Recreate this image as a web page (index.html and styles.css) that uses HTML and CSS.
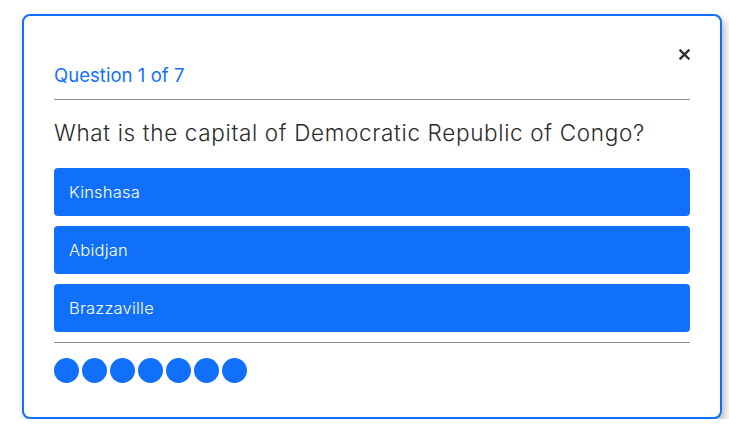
FILE: index.html
```html
<!DOCTYPE html>
<html lang="en">
<head>
<meta charset="utf-8">
<title>Quiz</title>
<link rel="stylesheet" href="styles.css">
</head>
<body>
<div class="modal">
  <div class="modal-top">
    <button class="close" type="button" aria-label="Close">
      <svg class="close-icon" width="11" height="11" viewBox="0 0 11 11" aria-hidden="true">
        <path d="M1.5 1.5 L9.5 9.5 M9.5 1.5 L1.5 9.5" stroke="#2f2f2f" stroke-width="2.4" stroke-linecap="square" fill="none"/>
      </svg>
    </button>
  </div>
  <div class="counter">Question 1 of 7</div>
  <hr class="rule rule-top">
  <h2 class="question">What is the capital of Democratic Republic of Congo?</h2>
  <div class="options">
    <button class="option" type="button">Kinshasa</button>
    <button class="option" type="button">Abidjan</button>
    <button class="option" type="button">Brazzaville</button>
  </div>
  <hr class="rule rule-bottom">
  <div class="dots">
    <span class="dot"></span>
    <span class="dot"></span>
    <span class="dot"></span>
    <span class="dot"></span>
    <span class="dot"></span>
    <span class="dot"></span>
    <span class="dot"></span>
  </div>
</div>
</body>
</html>
```
FILE: styles.css
```css
* { box-sizing: border-box; }

html, body {
  background: #ffffff;
}

body {
  margin: 0;
  padding: 14px 8px 0 22px;
  font-family: "Inter", "Open Sans", sans-serif;
}

.modal {
  width: 700px;
  height: 405px;
  border: 2px solid #1170fa;
  border-radius: 8px;
  background: #fff;
  padding: 30px 30px 33px;
  box-shadow: 3px 5px 8px rgba(0, 0, 0, 0.28);
  display: flex;
  flex-direction: column;
}

.modal-top {
  display: flex;
  justify-content: flex-end;
  align-items: center;
  height: 17px;
}

.close {
  border: 0;
  background: none;
  padding: 0;
  margin: 0;
  width: 11px;
  height: 11px;
  display: flex;
  cursor: pointer;
}

.close-icon { display: block; }

.counter {
  color: #1170fa;
  font-size: 18.5px;
  line-height: 24px;
  font-weight: 400;
  letter-spacing: 0.05px;
}

.rule {
  border: 0;
  border-top: 1px solid #8c8c8c;
  margin: 0;
}

.rule-top { margin-top: 12px; }

.question {
  margin: 20px 0 0;
  font-size: 22.5px;
  line-height: 26px;
  font-weight: 300;
  letter-spacing: 0.66px;
  color: #2a2a2a;
}

.options {
  margin-top: 22px;
  display: flex;
  flex-direction: column;
  gap: 10px;
}

.option {
  height: 48px;
  border: 0;
  border-radius: 4px;
  background: #1170fa;
  color: #fff;
  text-align: left;
  padding: 0 15px;
  font-family: inherit;
  font-size: 16.5px;
  font-weight: 300;
  letter-spacing: 0.2px;
  cursor: pointer;
}

.rule-bottom { margin-top: 10px; }

.dots {
  margin-top: 15px;
  display: flex;
  gap: 3px;
}

.dot {
  width: 25px;
  height: 25px;
  border-radius: 50%;
  background: #1170fa;
}
```
